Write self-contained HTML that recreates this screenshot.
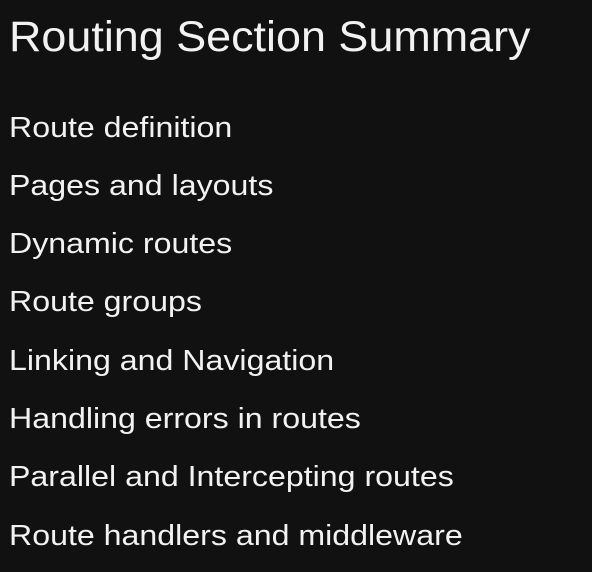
<!DOCTYPE html>
<html><head><style>
html,body{margin:0;padding:0;background:#111111;width:592px;height:572px;overflow:hidden}
div{position:absolute;left:9px;color:#f2f2f2;font-family:"Liberation Sans",sans-serif;line-height:1;white-space:nowrap;transform-origin:0 0}
.t{font-size:43px;top:15.6px;transform:scaleX(1.044)}
.i{font-size:29px;transform:scaleX(1.108)}
</style></head><body>
<div class="t">Routing Section Summary</div>
<div class="i" style="top:113.5px">Route definition</div>
<div class="i" style="top:171.8px">Pages and layouts</div>
<div class="i" style="top:230.1px">Dynamic routes</div>
<div class="i" style="top:288.4px">Route groups</div>
<div class="i" style="top:346.7px">Linking and Navigation</div>
<div class="i" style="top:405px">Handling errors in routes</div>
<div class="i" style="top:463.3px">Parallel and Intercepting routes</div>
<div class="i" style="top:521.5px">Route handlers and middleware</div>
</body></html>
